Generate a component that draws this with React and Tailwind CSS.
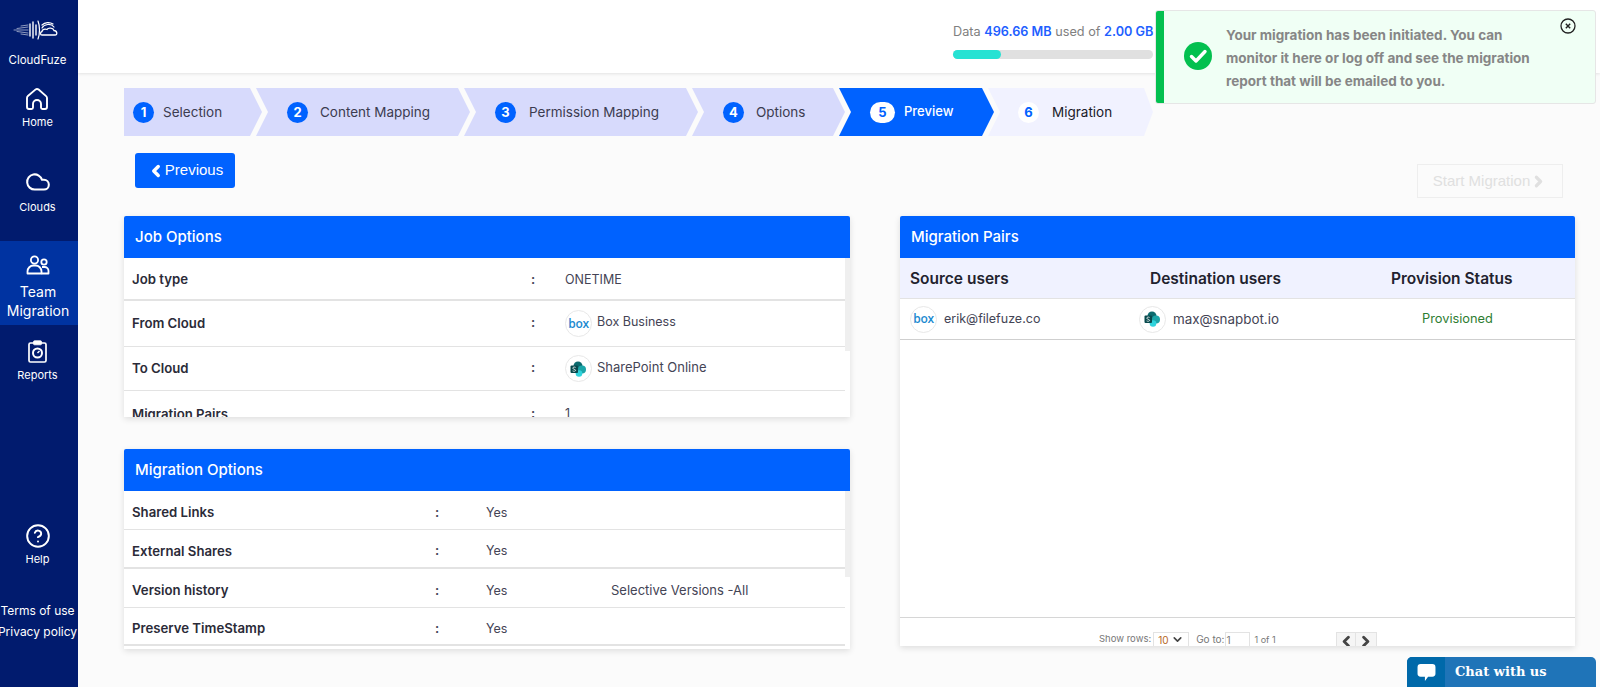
import React from 'react';
import { ChevronLeft, ChevronRight, ChevronDown, Cloud, CircleHelp } from 'lucide-react';

const steps = [
  { n: 1, label: 'Selection', w: 'w-[138px]', pl: 'pl-[9px]', ml: 'ml-[9px]', clip: '[clip-path:polygon(0_0,126px_0,100%_50%,126px_100%,0_100%)]', state: 'done' },
  { n: 2, label: 'Content Mapping', w: 'w-[214px]', pl: 'pl-[31px]', ml: 'ml-[12px]', clip: '[clip-path:polygon(0_0,202px_0,100%_50%,202px_100%,0_100%,12px_50%)]', state: 'done' },
  { n: 3, label: 'Permission Mapping', w: 'w-[234px]', pl: 'pl-[31px]', ml: 'ml-[13px]', clip: '[clip-path:polygon(0_0,222px_0,100%_50%,222px_100%,0_100%,12px_50%)]', state: 'done' },
  { n: 4, label: 'Options', w: 'w-[153px]', pl: 'pl-[31px]', ml: 'ml-[12px]', clip: '[clip-path:polygon(0_0,141px_0,100%_50%,141px_100%,0_100%,12px_50%)]', state: 'done' },
  { n: 5, label: 'Preview', w: 'w-[155px]', pl: 'pl-[31px]', ml: 'ml-[9px]', clip: '[clip-path:polygon(0_0,143px_0,100%_50%,143px_100%,0_100%,12px_50%)]', state: 'active' },
  { n: 6, label: 'Migration', w: 'w-[165px]', pl: 'pl-[30px]', ml: 'ml-[13px]', clip: '[clip-path:polygon(0_0,156px_0,100%_50%,156px_100%,0_100%,12px_50%)]', state: 'todo' },
];

function Logo() {
  return (
    <svg width="46" height="20" viewBox="0 0 46 20" fill="none" stroke="white" strokeLinecap="round">
      <path d="M1 10h14M4 8.500l11-1.500M4 11.500l11 1.500M8 6l7-1M8 14l7 1" strokeWidth="0.7" opacity="0.8" />
      <path d="M17 4v12M20 2v16M23 5v10" strokeWidth="1.4" />
      <path d="M25 1c2 5 2 13 0 18" strokeWidth="1.2" />
      <path d="M29 15c-2 0-2-3 0-3.500 0-2 3-3 5-2 1-2 6-2 7 1 3 0 4 4.500 1 4.500z" strokeWidth="1.3" />
      <path d="M29 8c2-4 9-5 12-1M29 5c3-3 8-3 11-1" strokeWidth="1.2" />
    </svg>
  );
}

function HomeIcon() {
  return (
    <svg width="24" height="24" viewBox="0 0 24 24" fill="none" stroke="white" strokeWidth="1.9" strokeLinejoin="round">
      <path d="M4 22a2 2 0 0 1-2-2v-9a2.500 2.500 0 0 1 .9-1.900l7.500-6.500a2.500 2.500 0 0 1 3.200 0l7.500 6.500a2.500 2.500 0 0 1 .9 1.900v9a2 2 0 0 1-2 2h-2.500a1.500 1.500 0 0 1-1.500-1.500v-3.500a4 4 0 0 0-8 0v3.500a1.500 1.500 0 0 1-1.500 1.500z" />
    </svg>
  );
}

function UsersIcon() {
  return (
    <svg width="24" height="20" viewBox="0 0 24 20" fill="none" stroke="white" strokeWidth="1.8">
      <circle cx="8.500" cy="5" r="3.600" />
      <circle cx="18" cy="7" r="2.700" />
      <path d="M1.500 18.500v-2a6 6 0 0 1 6-6h2a6 6 0 0 1 6 6v2z" strokeLinejoin="round" />
      <path d="M15.500 18.500h7v-2.500a4 4 0 0 0-4-4h-2.500" strokeLinejoin="round" />
    </svg>
  );
}

function ReportsIcon() {
  return (
    <svg width="19" height="23" viewBox="0 0 19 23" fill="none" stroke="white">
      <rect x="1" y="3" width="17" height="19" rx="1.500" strokeWidth="1.700" />
      <rect x="5.500" y="0.800" width="8" height="4" rx="1" fill="white" strokeWidth="0.8" />
      <circle cx="9.500" cy="13" r="4.500" strokeWidth="2" />
      <path d="M9.500 13l2-2" strokeWidth="1.500" />
    </svg>
  );
}

function BoxLogo() {
  return (
    <span className="flex h-[27px] w-[27px] shrink-0 items-center justify-center rounded-full border border-[#e8e8e8] bg-white">
      <span className="font-['Open_Sans',sans-serif] text-[12px] font-semibold leading-none tracking-[-0.3px] text-[#1b8ad0]">box</span>
    </span>
  );
}

function SharePointLogo() {
  return (
    <span className="flex h-[27px] w-[27px] shrink-0 items-center justify-center rounded-full border border-[#e8e8e8] bg-white">
      <svg width="17" height="16" viewBox="0 0 17 16">
        <circle cx="8" cy="5" r="4.500" fill="#0b6a6e" />
        <circle cx="12" cy="8.500" r="4" fill="#1ba5a8" />
        <circle cx="9" cy="12.500" r="3.300" fill="#2fd3dc" />
        <rect x="0.500" y="4.500" width="7.500" height="7.500" rx="1" fill="#07494d" />
        <path d="M5.600 6.400c-1-.6-2.800-.4-2.800.8 0 1.300 2.800.9 2.800 2.100 0 1.100-1.900 1.200-3 .6" fill="none" stroke="white" strokeWidth="0.800" />
      </svg>
    </span>
  );
}

function NavItem({ icon, label, className }) {
  return (
    <div className={`flex flex-col items-center ${className}`}>
      {icon}
      <span className="text-[11px] leading-[14px] text-white">{label}</span>
    </div>
  );
}

function Sidebar() {
  return (
    <aside className="flex h-full w-[78px] shrink-0 flex-col items-center overflow-hidden bg-[#011b6e] pr-[3px]">
      <div className="mt-[20px] -ml-[3px]"><Logo /></div>
      <span className="mt-[13px] text-[11.500px] leading-[14px] text-white">CloudFuze</span>
      <NavItem className="mt-[20px] gap-[4px]" icon={<HomeIcon />} label="Home" />
      <NavItem className="mt-[40px] gap-[5px]" icon={<Cloud size={26} color="white" strokeWidth={1.9} />} label="Clouds" />
      <div className="-mr-[3px] mt-[27px] flex h-[84px] w-[78px] shrink-0 flex-col items-center bg-[#0033a1] pr-[2px] pt-[14px]">
        <UsersIcon />
        <span className="mt-[7px] text-center text-[14px] leading-[19px] text-white">Team<br />Migration</span>
      </div>
      <NavItem className="mt-[15px] gap-[5px]" icon={<ReportsIcon />} label="Reports" />
      <NavItem className="mt-[141px] gap-[3px]" icon={<CircleHelp size={26} color="white" strokeWidth={1.8} />} label="Help" />
      <span className="mt-[37px] whitespace-nowrap text-[12px] leading-[16px] text-white">Terms of use</span>
      <span className="mt-[5px] whitespace-nowrap text-[12px] leading-[16px] text-white">Privacy policy</span>
    </aside>
  );
}

function Toast() {
  return (
    <div className="absolute left-[1077px] top-[10px] flex h-[94px] w-[441px] overflow-hidden rounded-[3px] border border-[#e6e6e6] bg-[#f0fff5]">
      <div className="w-[8px] shrink-0 bg-[#03c04f]" />
      <svg className="ml-[20px] mt-[31px] shrink-0" width="28" height="28" viewBox="0 0 28 28">
        <circle cx="14" cy="14" r="14" fill="#03c04f" />
        <path d="M7.500 14.500l4.500 4.500 9-9.500" fill="none" stroke="white" strokeWidth="3.400" strokeLinecap="round" strokeLinejoin="round" />
      </svg>
      <p className="ml-[14px] mt-[13px] w-[320px] text-[13.500px] font-bold leading-[23px] text-[#868686]">
        Your migration has been initiated. You can monitor it here or log off and see the migration report that will be emailed to you.
      </p>
      <svg className="ml-[14px] mt-[7px] shrink-0" width="16" height="16" viewBox="0 0 16 16" fill="none" stroke="#222">
        <circle cx="8" cy="8" r="7" strokeWidth="1.300" />
        <path d="M5.800 5.800l4.400 4.400M10.200 5.800l-4.400 4.400" strokeWidth="1.400" />
      </svg>
    </div>
  );
}

function Header() {
  return (
    <header className="relative flex h-[73px] shrink-0 justify-end bg-white pr-[447px] shadow-[0_1px_3px_rgba(0,0,0,0.1)]">
      <div className="mt-[23px] w-[200px]">
        <p className="whitespace-nowrap text-[12.700px] leading-[18px] text-[#808080]">
          Data <span className="font-semibold text-[#1f5fff]">496.66 MB</span> used of <span className="font-semibold text-[#1f5fff]">2.00 GB</span>
        </p>
        <div className="mt-[9px] h-[9px] w-full rounded-full bg-[#e0e0e0]">
          <div className="h-full w-[48px] rounded-full bg-[#26e2d3]" />
        </div>
      </div>
      <Toast />
    </header>
  );
}

function Stepper() {
  return (
    <div className="ml-[46px] mt-[15px] flex h-[48px] shrink-0">
      {steps.map((s, i) => (
        <div
          key={s.n}
          className={`flex h-full items-center ${s.w} ${s.pl} ${s.clip} ${i > 0 ? '-ml-[6px]' : ''} ${
            s.state === 'done' ? 'bg-[#d7dafc] text-[#3c3c50]' : s.state === 'active' ? 'bg-[#0062ff] text-white' : 'bg-[#f1f2ff] text-[#1a1a2a]'
          }`}
        >
          <span
            className={`flex h-[21px] items-center justify-center rounded-full text-[13px] font-bold leading-none ${
              s.state === 'done' ? 'w-[21px] bg-[#0062ff] text-white' : s.state === 'active' ? 'w-[25px] bg-white text-[#0062ff]' : 'w-[21px] bg-white text-[#0062ff]'
            }`}
          >
            {s.n}
          </span>
          <span className={`whitespace-nowrap ${s.state === 'active' ? 'text-[13px] font-medium' : 'text-[13.500px]'} ${s.ml}`}>{s.label}</span>
        </div>
      ))}
    </div>
  );
}

function Row({ className, children }) {
  return <div className={`flex w-[721px] items-center border-b border-[#e3e3e3] pl-2 text-[12.500px] text-[#444455] ${className}`}>{children}</div>;
}

function Panel({ title, className, children }) {
  return (
    <section className={`overflow-hidden rounded-t-[2px] bg-white shadow-[0_2px_6px_rgba(0,0,0,0.12)] ${className}`}>
      <div className="flex h-[42px] items-center bg-[#0062ff] pl-[11px] text-[15px] font-medium text-white">{title}</div>
      {children}
    </section>
  );
}

function JobOptions() {
  const Label = ({ children }) => <span className="w-[399px] text-[13.200px] font-semibold text-[#2b2b38]">{children}</span>;
  const Colon = () => <span className="w-[34px] font-bold">:</span>;
  return (
    <Panel title="Job Options" className="relative h-[201px] w-[726px]">
      <Row className="h-[43px] border-b-2 pt-[3px]"><Label>Job type</Label><Colon /><span>ONETIME</span></Row>
      <Row className="h-[46px]"><Label>From Cloud</Label><Colon /><BoxLogo /><span className="ml-[5px] pb-[2px]">Box Business</span></Row>
      <Row className="h-[44px]"><Label>To Cloud</Label><Colon /><SharePointLogo /><span className="ml-[5px] pb-[2px] text-[13px]">SharePoint Online</span></Row>
      <Row className="h-[44px] pt-[4px]"><Label>Migration Pairs</Label><Colon /><span>1</span></Row>
      <div className="absolute right-0 top-[42px] h-[93px] w-[5px] bg-[#efefef]" />
    </Panel>
  );
}

const migrationRows = [
  { label: 'Shared Links', h: 'h-[39px]' },
  { label: 'External Shares', h: 'h-[39px] border-b-2' },
  { label: 'Version history', h: 'h-[39px]', extra: 'Selective Versions -All' },
  { label: 'Preserve TimeStamp', h: 'h-[38px] border-b-2' },
];

function MigrationOptions() {
  return (
    <Panel title="Migration Options" className="relative mt-[32px] h-[200px] w-[726px]">
      {migrationRows.map((r) => (
        <Row key={r.label} className={`pt-[6px] ${r.h}`}>
          <span className="w-[303px] text-[13.200px] font-semibold text-[#2b2b38]">{r.label}</span>
          <span className="w-[51px] font-bold">:</span>
          <span className="w-[125px]">Yes</span>
          {r.extra && <span className="text-[13px]">{r.extra}</span>}
        </Row>
      ))}
      <div className="absolute right-0 top-[42px] h-[86px] w-[5px] bg-[#efefef]" />
    </Panel>
  );
}

function MigrationPairs() {
  return (
    <Panel title="Migration Pairs" className="ml-[50px] flex h-[430px] w-[675px] flex-col">
      <div className="flex h-[41px] shrink-0 items-center border-b border-[#e3e3e3] bg-[#f0f2ff] pl-[10px] pt-[1px] text-[15.500px] font-semibold text-[#22222e]">
        <span className="w-[240px] whitespace-nowrap">Source users</span>
        <span className="w-[241px] whitespace-nowrap">Destination users</span>
        <span className="whitespace-nowrap">Provision Status</span>
      </div>
      <div className="flex h-[41px] shrink-0 items-center border-b border-[#cfcfcf] pl-[10px] text-[12.500px] text-[#444455]">
        <div className="flex w-[229px] items-center gap-[7px]"><BoxLogo /><span>erik@filefuze.co</span></div>
        <div className="flex w-[283px] items-center gap-[7px]"><SharePointLogo /><span className="text-[13.400px]">max@snapbot.io</span></div>
        <span className="text-[12.800px] text-[#2e7d32]">Provisioned</span>
      </div>
      <div className="flex-1" />
      <div className="flex h-[29px] shrink-0 border-t border-[#d6d6d6] pl-[199px] pt-[14px] text-[10px] text-[#777]">
        <span className="text-[9.500px] leading-[14px]">Show rows:</span>
        <div className="ml-[2px] flex h-[20px] w-[36px] items-start justify-between border border-[#e3e3e3] px-[4px] text-[#b5651d]">10<ChevronDown size={13} strokeWidth={3} color="#444" /></div>
        <span className="ml-[7px] leading-[14px]">Go to:</span>
        <div className="ml-[1px] h-[20px] w-[25px] border border-[#e3e3e3] leading-[14px]">1</div>
        <span className="ml-[4px] text-[9px] leading-[16px]">1 of 1</span>
        <div className="ml-[60px] flex h-[20px] w-[41px] border border-[#e3e3e3] bg-[#f5f5f5]">
          <ChevronLeft size={17} strokeWidth={4} color="#444" className="w-[20px] border-r border-[#e3e3e3]" />
          <ChevronRight size={17} strokeWidth={4} color="#444" className="w-[20px]" />
        </div>
      </div>
    </Panel>
  );
}

function ChatButton() {
  return (
    <div className="absolute bottom-0 right-[4px] flex h-[30px] w-[189px] overflow-hidden rounded-t-[5px] bg-[#1f74b8]">
      <div className="flex w-[38px] items-center justify-center bg-[#0069aa]">
        <svg width="19" height="19" viewBox="0 0 18 18" fill="white">
          <path d="M3.500 1h11a3 3 0 0 1 3 3v6a3 3 0 0 1-3 3h-4l-3 4v-4h-4a3 3 0 0 1-3-3v-6a3 3 0 0 1 3-3z" />
        </svg>
      </div>
      <span className="ml-[10px] font-['DejaVu_Serif',serif] text-[13px] font-bold leading-[30px] text-white">Chat with us</span>
    </div>
  );
}

export default function App() {
  return (
    <div className="relative flex h-screen overflow-hidden bg-[#fbfbfb] font-['Inter',sans-serif]">
      <Sidebar />
      <main className="flex min-w-0 flex-1 flex-col">
        <Header />
        <Stepper />
        <div className="ml-[46px] flex h-[80px] shrink-0 items-start justify-between pr-[37px]">
          <button className="ml-[11px] mt-[17px] flex h-[35px] w-[100px] items-center justify-center rounded-[3px] bg-[#0062ff] font-['Liberation_Sans',sans-serif] text-[15px] font-medium text-white">
            <ChevronLeft size={18} strokeWidth={4.500} />Previous
          </button>
          <button className="mt-[28px] flex h-[34px] w-[146px] items-center justify-center border border-[#eeeeee] font-['Liberation_Sans',sans-serif] text-[15px] text-[#e0e0e0]">
            Start Migration<ChevronRight size={17} strokeWidth={4.500} />
          </button>
        </div>
        <div className="ml-[46px] flex items-start">
          <div className="flex flex-col">
            <JobOptions />
            <MigrationOptions />
          </div>
          <MigrationPairs />
        </div>
      </main>
      <ChatButton />
    </div>
  );
}
